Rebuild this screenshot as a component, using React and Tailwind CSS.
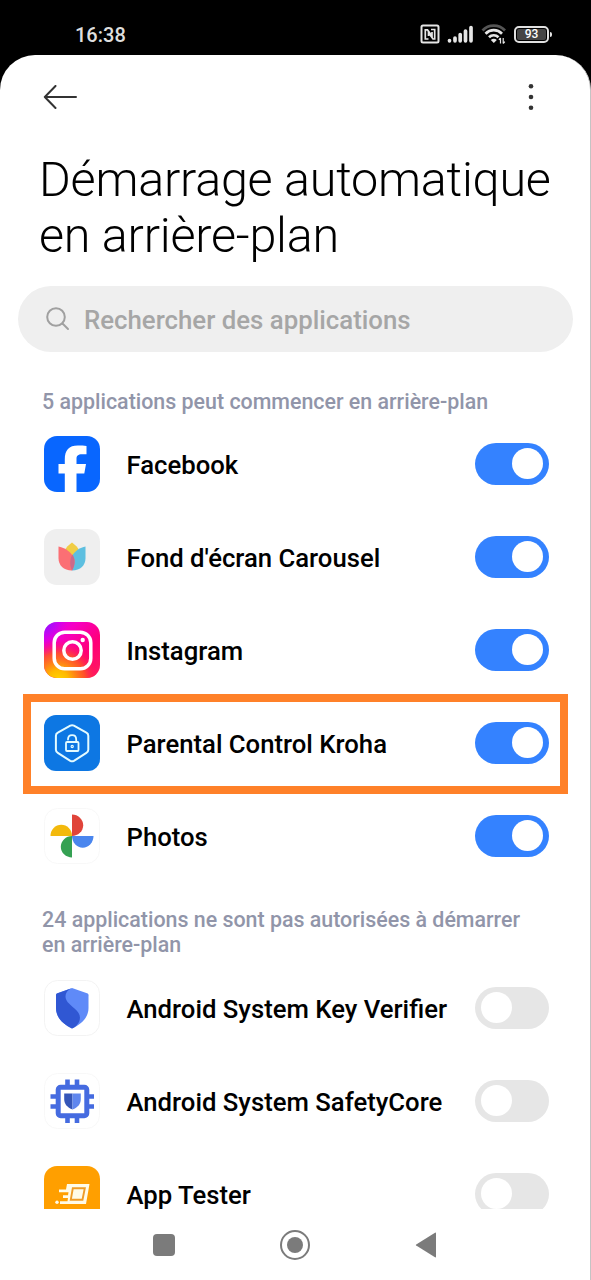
const allowedApps = [
  { name: "Facebook", Icon: FacebookIcon },
  { name: "Fond d'écran Carousel", Icon: CarouselIcon },
  { name: "Instagram", Icon: InstagramIcon },
  { name: "Parental Control Kroha", Icon: KrohaIcon, highlighted: true },
  { name: "Photos", Icon: PhotosIcon },
];

const blockedApps = [
  { name: "Android System Key Verifier", Icon: VerifierIcon },
  { name: "Android System SafetyCore", Icon: SafetyCoreIcon },
  { name: "App Tester", Icon: TesterIcon },
];

function FacebookIcon() {
  return (
    <svg viewBox="0 0 56 56" className="size-14">
      <rect width="56" height="56" rx="13" fill="#0866ff" />
      <path d="M20.800 56V37.500h-6.300V28h6.300v-4.500c0-9.500 4.200-14 13-14 3.500 0 6.200.1 8.700.6v8.200h-4.500c-4 0-5.500 1.500-5.500 4.700v5h9.500l-1.700 9.500h-7.800V56z" fill="#fff" />
    </svg>
  );
}

function CarouselIcon() {
  return (
    <svg viewBox="0 0 56 56" className="size-14">
      <rect width="56" height="56" rx="13" fill="#efefef" />
      <path d="M28 13.500c3.500 2.500 6 5 7 8L28 30l-7-8.500c1-3 3.500-5.500 7-8z" fill="#f0cd45" />
      <path d="M41.500 17.500v11.500c0 7.500-5 12.500-13.500 12.500-1.500-3-2-7-1.500-11C28.500 24 34 19 41.500 17.500z" fill="#5dbfe0" />
      <path d="M14.500 17.500v11.500c0 7.500 5 12.500 13.500 12.500 2-3.500 3-7 2.500-11C28.500 24 22 19 14.500 17.500z" fill="#fb6f74" />
      <path d="M28.500 25.500c1.600 2.500 2.300 5.500 2 8.500-.3 3-1.200 5.500-2.500 7.500-1.800-3.500-2.200-7.500-1.500-11 .4-2 1-3.500 2-5z" fill="#cb6a8a" />
    </svg>
  );
}

function InstagramIcon() {
  return (
    <svg viewBox="0 0 56 56" className="size-14">
      <defs>
        <linearGradient id="ig-base" x1="0" y1="0" x2="1" y2="1">
          <stop offset="0" stopColor="#c800ff" />
          <stop offset=".3" stopColor="#f700c4" />
          <stop offset=".65" stopColor="#ff0076" />
          <stop offset="1" stopColor="#ff1e5c" />
        </linearGradient>
        <radialGradient id="ig-warm" cx=".25" cy="1.050" r=".75">
          <stop offset="0" stopColor="#ffd600" />
          <stop offset=".25" stopColor="#ffb900" />
          <stop offset=".65" stopColor="#ff5a1f" stopOpacity=".85" />
          <stop offset="1" stopColor="#ff0069" stopOpacity="0" />
        </radialGradient>
        <radialGradient id="ig-violet" cx="0" cy="0" r=".4">
          <stop offset="0" stopColor="#7a1cff" />
          <stop offset="1" stopColor="#c800ff" stopOpacity="0" />
        </radialGradient>
      </defs>
      <rect width="56" height="56" rx="13" fill="url(#ig-base)" />
      <rect width="56" height="56" rx="13" fill="url(#ig-violet)" />
      <rect width="56" height="56" rx="13" fill="url(#ig-warm)" />
      <g fill="none" stroke="#fff" strokeWidth="3.500">
        <rect x="10.200" y="10.200" width="36.600" height="36.600" rx="10.500" />
        <circle cx="28.500" cy="28.500" r="8.700" />
      </g>
      <circle cx="38.700" cy="18" r="2.200" fill="#fff" />
    </svg>
  );
}

function KrohaIcon() {
  return (
    <svg viewBox="0 0 56 56" className="size-14">
      <rect width="56" height="56" rx="12" fill="#0d77e3" />
      <g fill="none" stroke="#e4fbff" strokeLinejoin="round" strokeLinecap="round">
        <path d="M26.300 10.700a4 4 0 0 1 3.600 0l12.500 7a3.500 3.500 0 0 1 1.900 3.100v14a3.500 3.500 0 0 1-1.900 3.100l-12.500 7.900a4 4 0 0 1-3.600 0l-12.500-7.900a3.500 3.500 0 0 1-1.900-3.100v-14a3.500 3.500 0 0 1 1.900-3.100z" strokeWidth="2" />
        <rect x="22" y="27" width="12.500" height="9" rx="1" strokeWidth="1.800" />
        <path d="M24 24.500c0-2.600 1.700-4.300 4.100-4.300 2.500 0 4.100 1.800 4.100 4.300V27" strokeWidth="1.800" />
        <circle cx="28.200" cy="31.500" r="1.100" strokeWidth="1.200" />
      </g>
    </svg>
  );
}

function PhotosIcon() {
  return (
    <svg viewBox="0 0 56 56" className="size-14">
      <rect x=".5" y=".5" width="55" height="55" rx="13" fill="#fff" stroke="#f8f8f8" />
      <path d="M28 6.500a11.200 10.750 0 0 1 0 21.500z" fill="#e0443a" />
      <path d="M6.500 28a10.750 11.200 0 0 1 21.500 0z" fill="#f3b90c" />
      <path d="M49.500 28a10.750 11.700 0 0 1-21.500 0z" fill="#4a86ee" />
      <path d="M28 49.500a11.200 10.750 0 0 1 0-21.500z" fill="#35a153" />
    </svg>
  );
}

function VerifierIcon() {
  return (
    <svg viewBox="0 0 56 56" className="size-14">
      <rect x=".5" y=".5" width="55" height="55" rx="13" fill="#fff" stroke="#f3f3f3" />
      <path d="M28 8l15 5.300c1 .4 1.500 1 1.500 2V28c0 9-6.500 16-16.500 20.500-9.500-4.500-16-11.500-16-20.500V15.300c0-1 .5-1.600 1.500-2z" fill="#5f8af8" />
      <path d="M27 8.400l-13.500 4.900c-1 .4-1.500 1-1.500 2V28c0 9 6.500 16 16 20.500 3-1.200 5.500-3.500 7-6.500 2.200-5 .5-9.500-4.500-13.500-6-5-9-8-9-12 0-3.500 2-6.600 5.500-8.100z" fill="#3057d3" />
    </svg>
  );
}

function SafetyCoreIcon() {
  return (
    <svg viewBox="0 0 56 56" className="size-14">
      <rect x=".5" y=".5" width="55" height="55" rx="13" fill="#fff" stroke="#f8f8f8" />
      <path d="M23.500 6.500v7M33 6.500v7M23.500 43v7M33 43v7M6.500 23.500h7M6.500 33.500h7M43 23.500h7M43 33.500h7" stroke="#456be0" strokeWidth="4.600" />
      <rect x="14.200" y="14.200" width="28.600" height="28.600" rx="2.500" fill="#fff" stroke="#456be0" strokeWidth="5" />
      <path d="M20.200 20.500H28.500V36.500c-5.300-2-8.300-5.500-8.300-10.500z" fill="#3556b8" />
      <path d="M36.800 20.500H28.500V36.500c5.300-2 8.300-5.500 8.300-10.500z" fill="#6087ee" />
    </svg>
  );
}

function TesterIcon() {
  return (
    <svg viewBox="0 0 56 56" className="size-14">
      <rect width="56" height="56" rx="13" fill="#ff9f00" />
      <path d="M23 18h22.500L42 38H16v-2.800h7.500l.5-3.200h-5v-2.800h5l.5-3H15v-2.800h7z" fill="#fffbe8" />
      <path d="M28.800 22.300h12l-2.300 11.400H26.800z" fill="#fffbe8" stroke="#ee9c28" strokeWidth="1.900" />
      <circle cx="13" cy="36.200" r="1.700" fill="#fffbe8" />
    </svg>
  );
}

function Toggle({ on }) {
  return (
    <div className={`flex h-[42px] w-[74px] items-center rounded-full px-[6px] ${on ? "justify-end bg-[#3482ff]" : "justify-start bg-[#e6e6e6]"}`}>
      <div className="size-[31px] rounded-full bg-white" />
    </div>
  );
}

function AppRow({ app, on }) {
  const { name, Icon, highlighted } = app;
  return (
    <div className="relative flex h-[93px] shrink-0 items-center pr-[41px] pl-11">
      <Icon />
      <div className="ml-[26.500px] flex-1 pt-[4px] text-[25.700px] font-medium whitespace-nowrap text-black">{name}</div>
      <Toggle on={on} />
      {highlighted && <div className="absolute -top-[2px] right-[22px] -bottom-[5px] left-[23px] border-8 border-[#ff8129]" />}
    </div>
  );
}

function StatusBar() {
  return (
    <div className="flex h-[55px] shrink-0 items-center justify-between pt-[13px] pr-[39px] pl-[75px]">
      <div className="pt-px text-[20px] font-medium text-[#dedede]">16:38</div>
      <div className="flex items-center">
        <svg viewBox="0 0 20 20" className="size-5" fill="none" stroke="#e6e6e6">
          <rect x="1.500" y="1.500" width="17" height="17" rx="1.500" strokeWidth="2" />
          <path d="M8.500 15H5.300V5.800H7.500L12 12V8" strokeWidth="1.700" />
          <path d="M11 5.500h3.700V15H13L8.500 8.800V12" strokeWidth="1.700" />
        </svg>
        <svg viewBox="0 0 27 18" className="ml-[7px] h-[18px] w-[27px]" stroke="#e6e6e6" strokeWidth="3.700" strokeLinecap="round">
          <path d="M2.500 15.500v.3M8 13v2.800M13.200 9.500v6.300M18.500 6v9.800M24 2.500v13.300" />
        </svg>
        <svg viewBox="0 0 26 20" className="ml-[7px] h-5 w-[26px]" fill="none" stroke="#e6e6e6" strokeWidth="2.700">
          <path d="M1.500 6.500a15.500 15.500 0 0 1 22.500 0" stroke="#555" />
          <path d="M4.500 9.700a11.500 11.500 0 0 1 16.500 0M8 13.200a6.800 6.800 0 0 1 9.500 0" />
          <path d="M9.800 16a4.200 4.200 0 0 1 6 0l-3 3z" fill="#e6e6e6" stroke="none" />
          <path d="M19.500 14v5.500m0-5.500l-1.600 1.800M22.200 19.500v-5.500m0 5.500l1.600-1.800" strokeWidth="1.200" />
        </svg>
        <div className="ml-[7px] flex h-[17px] w-[35px] items-center justify-center rounded-[5px] border-2 border-[#e0e0e0] p-px">
          <div className="flex h-full w-full items-center justify-center rounded-[2px] bg-[#444] text-[12px] leading-none font-medium text-white">93</div>
        </div>
        <div className="ml-px h-[5px] w-[2px] rounded-r bg-[#e6e6e6]" />
      </div>
    </div>
  );
}

export default function App() {
  return (
    <div className="flex h-[1280px] w-[591px] flex-col overflow-hidden bg-black font-['Roboto',sans-serif]">
      <StatusBar />
      <div className="flex min-h-0 flex-1 flex-col rounded-t-[35px] border-r border-[#c4c4c4] bg-white">
        <div className="flex h-[84px] shrink-0 items-center justify-between pr-[51px] pl-[43px]">
          <svg viewBox="0 0 34 24" className="h-6 w-[34px]" fill="none" stroke="#333" strokeWidth="2" strokeLinecap="round" strokeLinejoin="round">
            <path d="M33 12H2M12.500 1L1.800 12l10.700 11" />
          </svg>
          <svg viewBox="0 0 16 28" className="h-7 w-4" fill="#333">
            <circle cx="8" cy="3.200" r="2.300" />
            <circle cx="8" cy="14" r="2.300" />
            <circle cx="8" cy="24.700" r="2.300" />
          </svg>
        </div>

        <h1 className="mt-[13px] shrink-0 pl-[39px] text-[48.500px] leading-[56px] font-light tracking-[-0.24px] whitespace-nowrap text-black">
          Démarrage automatique
          <br />
          en arrière-plan
        </h1>

        <div className="mt-[22px] mr-[17px] ml-[18px] flex h-[66px] shrink-0 items-center rounded-full bg-[#efefef] pl-[27px]">
          <svg viewBox="0 0 26 26" className="size-[26px]" fill="none" stroke="#a0a0a0" strokeWidth="2" strokeLinecap="round">
            <circle cx="11" cy="11" r="8.800" />
            <path d="M17.500 17.500l5.500 5.500" />
          </svg>
          <div className="ml-[13px] pt-[3px] text-[25.800px] font-medium text-[#a6a6a6]">Rechercher des applications</div>
        </div>

        <div className="flex min-h-0 flex-1 flex-col overflow-hidden">
          <div className="mt-[37px] shrink-0 pl-[42px] text-[21.400px] leading-[25px] font-medium text-[#9195a9]">
            5 applications peut commencer en arrière-plan
          </div>
          <div className="mt-[3px] shrink-0">
            {allowedApps.map((app) => (
              <AppRow key={app.name} app={app} on />
            ))}
          </div>
          <div className="mt-[25px] mb-px shrink-0 pl-[42px] text-[21.400px] leading-[25px] font-medium text-[#9195a9]">
            24 applications ne sont pas autorisées à démarrer
            <br />
            en arrière-plan
          </div>
          <div className="mt-[3px] shrink-0">
            {blockedApps.map((app) => (
              <AppRow key={app.name} app={app} on={false} />
            ))}
          </div>
        </div>

        <div className="flex h-[71px] shrink-0 items-center justify-between pr-[153px] pl-[153px]">
          <div className="size-[22px] rounded-[4px] bg-[#7b7b7b]" />
          <div className="flex size-[30px] items-center justify-center rounded-full border-2 border-[#7b7b7b]">
            <div className="size-4 rounded-full bg-[#7b7b7b]" />
          </div>
          <svg viewBox="0 0 22 26" className="h-[26px] w-[22px]" fill="#7b7b7b">
            <path d="M20 .7q1-.5 1 .6v23.400q0 1.100-1 .6L1.200 13.600q-.9-.6 0-1.200z" />
          </svg>
        </div>
      </div>
    </div>
  );
}
